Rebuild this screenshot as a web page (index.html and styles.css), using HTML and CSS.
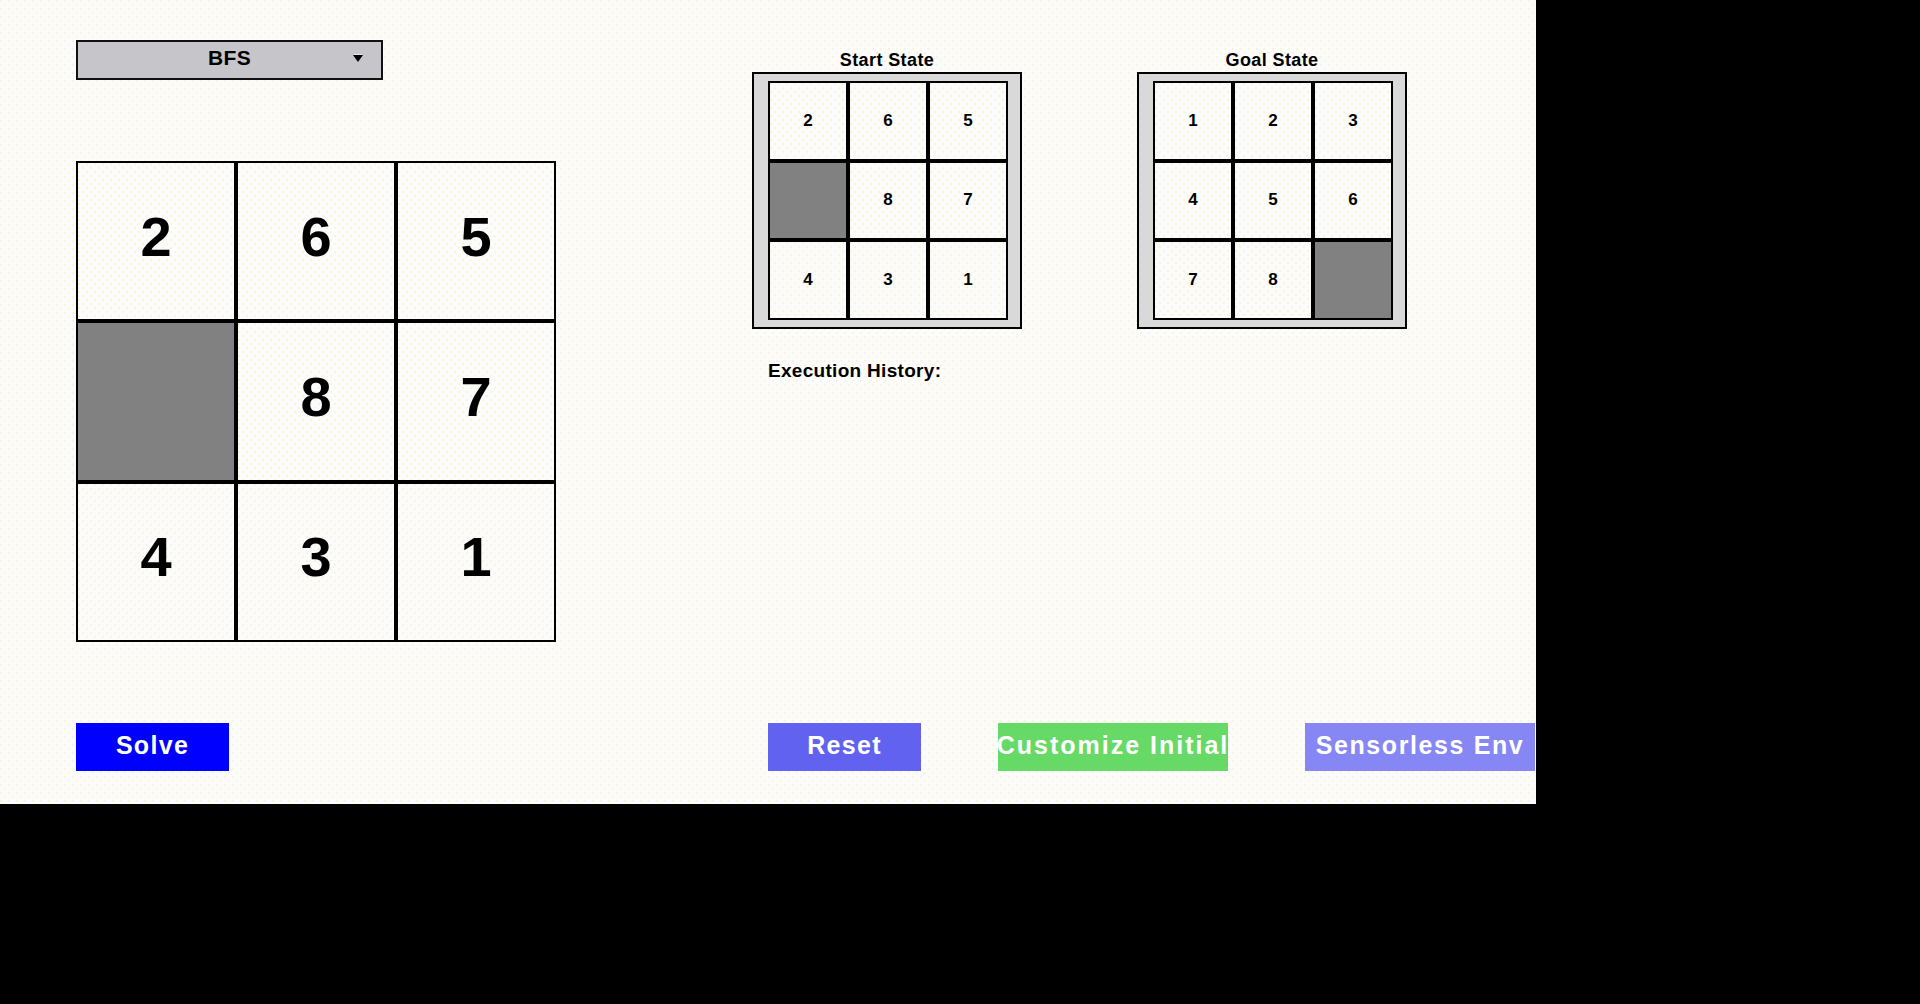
FILE: index.html
```html
<!DOCTYPE html>
<html>
<head>
<meta charset="utf-8">
<title>8 Puzzle</title>
<link rel="stylesheet" href="styles.css">
</head>
<body>
<div class="app">
  <div class="top">
    <div class="left">
      <div class="dropdown"><span class="dd-label">BFS</span><span class="caret"></span></div>
      <div class="board big">
        <div class="cell">2</div><div class="cell">6</div><div class="cell">5</div>
        <div class="cell empty"></div><div class="cell">8</div><div class="cell">7</div>
        <div class="cell">4</div><div class="cell">3</div><div class="cell">1</div>
      </div>
    </div>
    <div class="right">
      <div class="states">
        <div class="state">
          <div class="state-title">Start State</div>
          <div class="frame">
            <div class="board small">
              <div class="cell">2</div><div class="cell">6</div><div class="cell">5</div>
              <div class="cell empty"></div><div class="cell">8</div><div class="cell">7</div>
              <div class="cell">4</div><div class="cell">3</div><div class="cell">1</div>
            </div>
          </div>
        </div>
        <div class="state">
          <div class="state-title">Goal State</div>
          <div class="frame">
            <div class="board small">
              <div class="cell">1</div><div class="cell">2</div><div class="cell">3</div>
              <div class="cell">4</div><div class="cell">5</div><div class="cell">6</div>
              <div class="cell">7</div><div class="cell">8</div><div class="cell empty"></div>
            </div>
          </div>
        </div>
      </div>
      <div class="history">Execution History:</div>
    </div>
  </div>
  <div class="actions">
    <div class="btn solve">Solve</div>
    <div class="btn reset">Reset</div>
    <div class="btn custom">Customize Initial</div>
    <div class="btn sensorless">Sensorless Env</div>
  </div>
</div>
</body>
</html>
```
FILE: styles.css
```css
html, body {
  margin: 0;
  padding: 0;
  background: #000;
  width: 1920px;
  height: 1004px;
  overflow: hidden;
  font-family: "Liberation Sans", Arial, Helvetica, sans-serif;
  font-weight: bold;
  color: #000;
}

.app,
.cell {
  background-color: #fcfcfe;
  background-image:
    radial-gradient(circle at 1px 1px, #f6f3a0 0.5px, transparent 0.9px),
    radial-gradient(circle at 5px 5px, #f6f3a0 0.5px, transparent 0.9px);
  background-size: 8px 8px, 8px 8px;
}

.app {
  width: 1536px;
  height: 804px;
  box-sizing: border-box;
  padding: 40px 0 0 76px;
  display: flex;
  flex-direction: column;
}

.top {
  display: flex;
  align-items: flex-start;
}

.left {
  width: 480px;
  display: flex;
  flex-direction: column;
}

.dropdown {
  width: 307px;
  height: 40px;
  box-sizing: border-box;
  border: 2px solid #111;
  background: #c6c6ca;
  display: grid;
  grid-template-columns: 1fr auto 1fr;
  align-items: center;
}

.dd-label {
  grid-column: 2;
  font-size: 21px;
  line-height: 24px;
  letter-spacing: 0.3px;
  padding-bottom: 4px;
}

.caret {
  grid-column: 3;
  justify-self: end;
  margin-right: 18px;
  margin-bottom: 3px;
  width: 0;
  height: 0;
  border-left: 5px solid transparent;
  border-right: 5px solid transparent;
  border-top: 7px solid #000;
  box-shadow: 0 -2px 0 -1px #e8e8e8;
}

.board {
  display: grid;
  grid-template-columns: repeat(3, 1fr);
  grid-template-rows: repeat(3, 1fr);
  background: #000;
  border: 2px solid #000;
  box-sizing: border-box;
}

.board.big {
  margin-top: 81px;
  width: 480px;
  height: 481px;
  gap: 4px;
}

.board.small {
  width: 240px;
  height: 239px;
  gap: 4px;
}

.cell {
  display: flex;
  align-items: center;
  justify-content: center;
}

.big .cell {
  font-size: 56px;
  line-height: 64px;
  padding-bottom: 9px;
}

.small .cell {
  font-size: 17px;
  line-height: 20px;
}

.cell.empty {
  background: #818181;
}

.right {
  margin-left: 196px;
  padding-top: 9px;
  display: flex;
  flex-direction: column;
}

.states {
  display: flex;
  gap: 115px;
}

.state {
  display: flex;
  flex-direction: column;
  align-items: center;
}

.state-title {
  font-size: 18px;
  line-height: 22px;
  letter-spacing: 0.4px;
  margin-bottom: 1px;
}

.frame {
  width: 270px;
  height: 257px;
  box-sizing: border-box;
  border: 2px solid #000;
  background: #d9d9d9;
  padding: 7px 12px 7px 14px;
}

.history {
  margin-top: 31px;
  padding-left: 16px;
  font-size: 19px;
  line-height: 22px;
  letter-spacing: 0.3px;
}

.actions {
  margin-top: 81px;
  display: flex;
  align-items: center;
}

.btn {
  height: 48px;
  display: flex;
  align-items: center;
  justify-content: center;
  overflow: hidden;
  white-space: nowrap;
  color: #fff;
  font-size: 25px;
  line-height: 28px;
  letter-spacing: 1.3px;
  padding-bottom: 4px;
  box-sizing: border-box;
}

.solve {
  width: 153px;
  background: #0000ff;
}

.reset {
  width: 153px;
  margin-left: 539px;
  background: #6262f0;
}

.custom {
  width: 230px;
  margin-left: 77px;
  background: #66d966;
  letter-spacing: 2px;
}

.sensorless {
  width: 230px;
  margin-left: 77px;
  background: #8686f4;
  letter-spacing: 1.6px;
}
```
